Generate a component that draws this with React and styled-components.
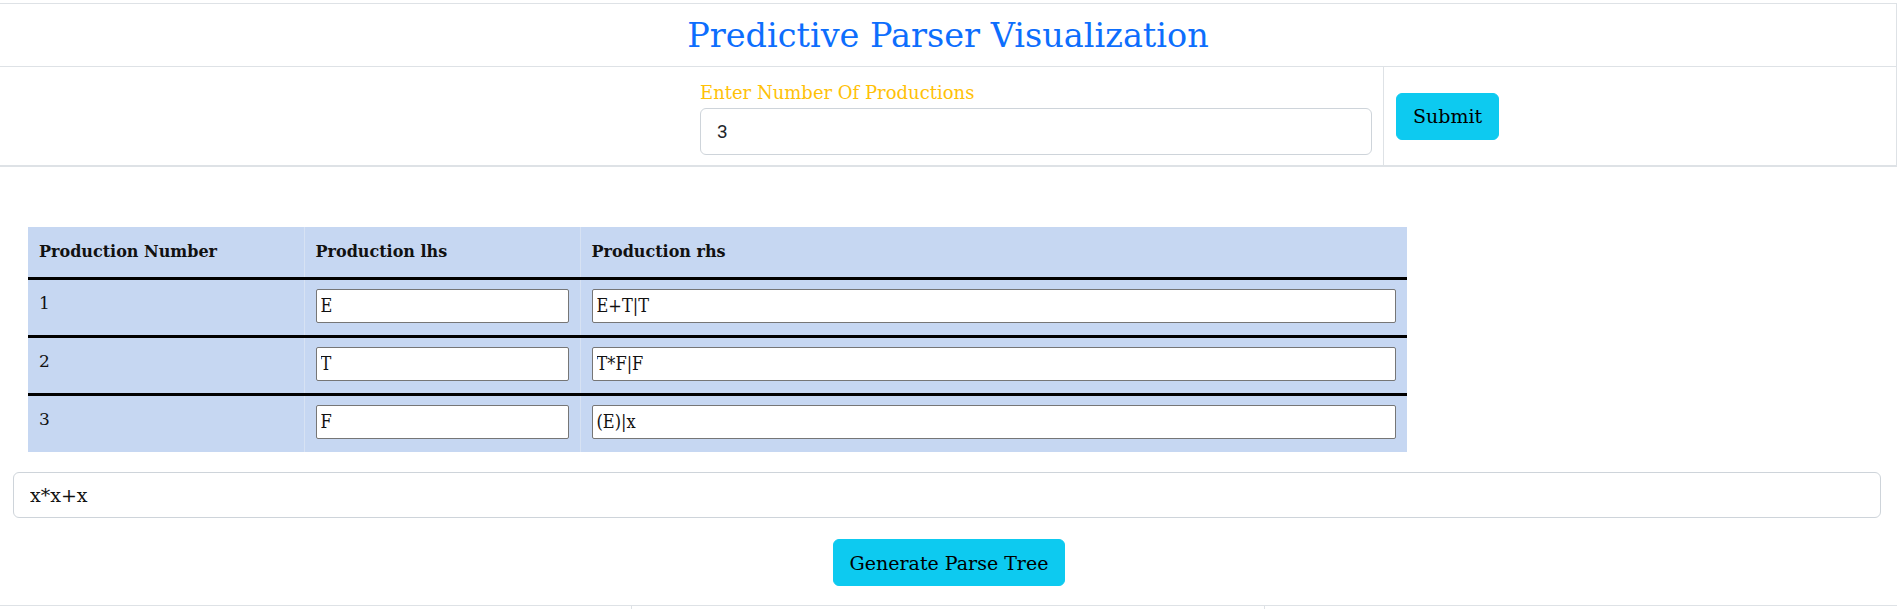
import React from 'react';
import styled, { createGlobalStyle } from 'styled-components';

const GlobalStyle = createGlobalStyle`
  body {
    margin: 0;
    background: #ffffff;
    font-family: "DejaVu Serif", serif;
    color: #212529;
  }
  * {
    box-sizing: border-box;
  }
`;

const Page = styled.div`
  width: 1898px;
  padding-top: 3px;
`;

const TitleBar = styled.div`
  width: 1897px;
  height: 64px;
  border-top: 1px solid #dee2e6;
  border-bottom: 1px solid #dee2e6;
  border-right: 1px solid #dee2e6;
  display: flex;
  align-items: center;
  justify-content: center;
`;

const Title = styled.h1`
  margin: 0;
  font-size: 33.5px;
  font-weight: 400;
  color: #0d6efd;
`;

const CountRow = styled.div`
  width: 1897px;
  height: 100px;
  display: grid;
  grid-template-columns: 689px 695px 1fr;
  border-bottom: 2px solid #dee2e6;
  border-right: 1px solid #dee2e6;
`;

const Cell = styled.div`
  display: flex;
  flex-direction: column;
  justify-content: center;
  padding: 0 ${(p) => (p.$pad ? p.$pad : '8px')};
  border-right: ${(p) => (p.$divider ? '1px solid #dee2e6' : 'none')};
`;

const Label = styled.label`
  font-size: 18px;
  color: #ffc107;
  line-height: 22px;
  margin: 5px 0 4px;
`;

const CountInput = styled.input`
  width: 100%;
  height: 47px;
  padding: 0 16px;
  border: 1px solid #ced4da;
  border-radius: 6px;
  font-family: Roboto, "Liberation Sans", sans-serif;
  font-size: 19px;
  color: #212529;
  outline: none;
`;

const InfoButton = styled.button`
  align-self: ${(p) => (p.$center ? 'center' : 'flex-start')};
  height: 47px;
  padding: 0 16px;
  border: 1px solid #0dcaf0;
  border-radius: 6px;
  background: #0dcaf0;
  color: #000000;
  font-family: "DejaVu Serif", serif;
  font-size: 19px;
  cursor: pointer;
`;

const TableWrap = styled.div`
  padding: 60px 0 20px 28px;
`;

const ProdTable = styled.table`
  width: 1379px;
  border-collapse: collapse;
  background: #c6d7f2;
`;

const HeadCell = styled.th`
  width: ${(p) => p.$w};
  height: 51px;
  padding: 0 11px;
  text-align: left;
  font-size: 16px;
  font-weight: 700;
  color: #111;
  border-left: 1px solid #d7e2f3;
  border-bottom: 3px solid #000;
  &:first-child {
    border-left: none;
  }
`;

const BodyRow = styled.tr`
  border-top: 3px solid #000;
  &:first-child {
    border-top: none;
  }
`;

const BodyCell = styled.td`
  height: 58px;
  padding: 9px 11px 11px;
  vertical-align: top;
  font-size: 17px;
  line-height: 24px;
  color: #111;
  border-left: 1px solid #d7e2f3;
  &:first-child {
    border-left: none;
    padding-top: 11px;
  }
`;

const CellInput = styled.input`
  display: block;
  width: 100%;
  height: 34px;
  padding: 0 4px;
  border: 1px solid #767676;
  border-radius: 2px;
  background: #fff;
  font-family: "DejaVu Serif", serif;
  font-stretch: condensed;
  font-size: 18px;
  color: #111;
  outline: none;
`;

const StringInput = styled.input`
  display: block;
  width: 1868px;
  height: 46px;
  margin-left: 13px;
  padding: 0 16px;
  border: 1px solid #ced4da;
  border-radius: 6px;
  font-family: "DejaVu Serif", serif;
  font-size: 19px;
  color: #111;
  outline: none;
`;

const ButtonRow = styled.div`
  display: flex;
  justify-content: center;
  padding: 21px 0 19px;
`;

const FooterRow = styled.div`
  width: 1897px;
  height: 4px;
  display: grid;
  grid-template-columns: repeat(3, 1fr);
  border-top: 1px solid #dee2e6;
`;

const FooterCell = styled.div`
  border-right: 1px solid #dee2e6;
  &:last-child {
    border-right: none;
  }
`;

const productions = [
  { id: 1, lhs: 'E', rhs: 'E+T|T' },
  { id: 2, lhs: 'T', rhs: 'T*F|F' },
  { id: 3, lhs: 'F', rhs: '(E)|x' },
];

export default function App() {
  return (
    <Page>
      <GlobalStyle />
      <TitleBar>
        <Title>Predictive Parser Visualization</Title>
      </TitleBar>

      <CountRow>
        <Cell />
        <Cell $divider $pad="11px">
          <Label>Enter Number Of Productions</Label>
          <CountInput defaultValue="3" />
        </Cell>
        <Cell $pad="12px">
          <InfoButton>Submit</InfoButton>
        </Cell>
      </CountRow>

      <TableWrap>
        <ProdTable>
          <thead>
            <tr>
              <HeadCell $w="276px">Production Number</HeadCell>
              <HeadCell $w="276px">Production lhs</HeadCell>
              <HeadCell>Production rhs</HeadCell>
            </tr>
          </thead>
          <tbody>
            {productions.map((p) => (
              <BodyRow key={p.id}>
                <BodyCell>{p.id}</BodyCell>
                <BodyCell>
                  <CellInput defaultValue={p.lhs} />
                </BodyCell>
                <BodyCell>
                  <CellInput defaultValue={p.rhs} />
                </BodyCell>
              </BodyRow>
            ))}
          </tbody>
        </ProdTable>
      </TableWrap>

      <StringInput defaultValue="x*x+x" />

      <ButtonRow>
        <InfoButton $center>Generate Parse Tree</InfoButton>
      </ButtonRow>

      <FooterRow>
        <FooterCell />
        <FooterCell />
        <FooterCell />
      </FooterRow>
    </Page>
  );
}
